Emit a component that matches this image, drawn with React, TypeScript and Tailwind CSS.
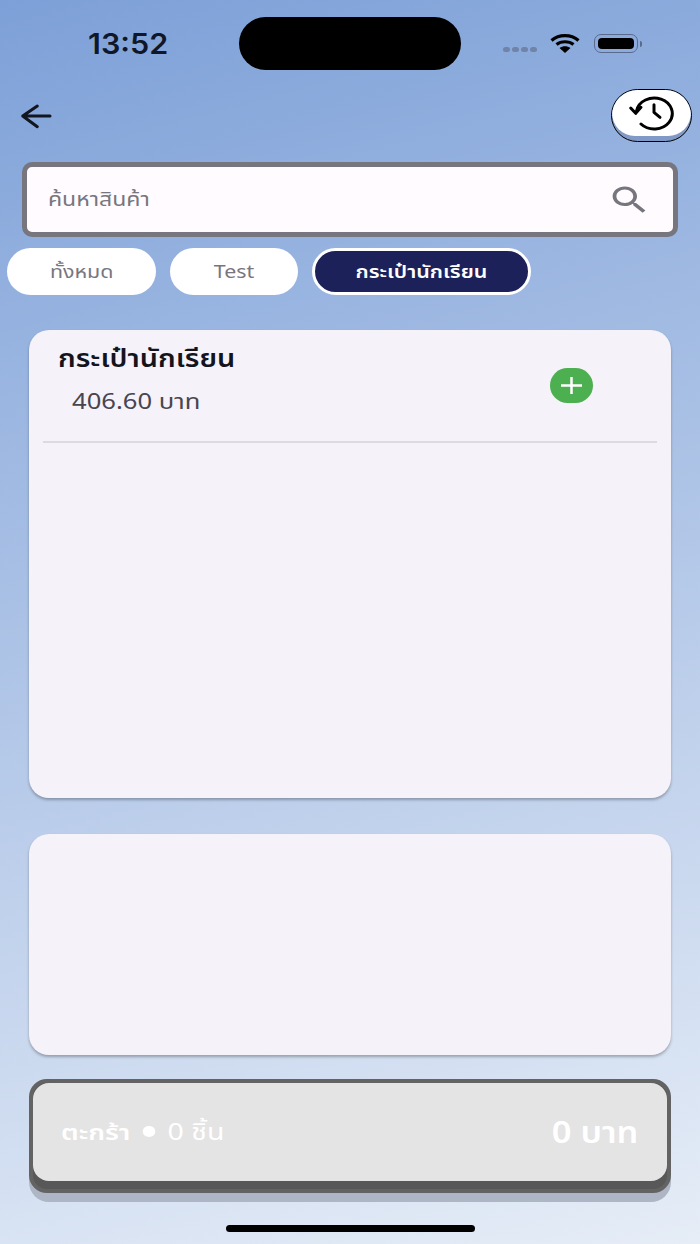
import React from 'react';

const FONT = "font-['Noto_Sans','Noto_Sans_Thai','DejaVu_Sans',sans-serif]";

const StatusBar = () => (
  <div className="flex h-[53px] mt-[17px] items-center">
    <div className="w-[239px] pl-[88px] text-[28px] font-semibold text-[#0f1729] font-['Inter',sans-serif] leading-none">
      <div className="origin-left scale-x-[1.09]">13:52</div>
    </div>
    <div className="w-[222px] h-[53px] rounded-full bg-black" />
    <div className="flex items-center pl-[42px]">
      <div className="flex gap-[2px] mt-[12px]">
        <span className="w-[7px] h-[5px] rounded-full bg-[#7083a8]" />
        <span className="w-[7px] h-[5px] rounded-full bg-[#7083a8]" />
        <span className="w-[7px] h-[5px] rounded-full bg-[#7083a8]" />
        <span className="w-[7px] h-[5px] rounded-full bg-[#7083a8]" />
      </div>
      <svg width="30" height="19" viewBox="0 0 30 19" className="ml-[13px]">
        <path d="M1.5 6.5 C9 0 21 0 28.5 6.5" fill="none" stroke="#000" strokeWidth="3.2" />
        <path d="M6.5 10.5 C11 6.8 19 6.8 23.5 10.5" fill="none" stroke="#000" strokeWidth="3.2" />
        <path d="M9.5 14 L15 19 L20.5 14 C17 11.8 13 11.8 9.5 14 Z" fill="#000" />
      </svg>
      <div className="ml-[14px] w-[44px] h-[19px] rounded-[7px] border border-[#5a6a8c] p-[3px]">
        <div className="w-full h-full rounded-[4px] bg-black" />
      </div>
      <div className="w-[2px] h-[6px] rounded-r-full bg-[#5a6a8c] ml-[2px]" />
    </div>
  </div>
);

const Chip = ({ label, width, active }: { label: string; width: string; active?: boolean }) => (
  <div
    className={`${width} h-[47px] rounded-full flex items-center justify-center text-[18px] ${
      active ? 'bg-[#1c2259] border-[3px] border-white font-semibold text-white' : 'bg-white text-[#77767f]'
    }`}
  >
    <span className="scale-x-[1.19]">{label}</span>
  </div>
);

export default function App() {
  return (
    <div className={`${FONT} w-[700px] h-[1244px] overflow-hidden flex flex-col bg-[linear-gradient(165deg,#7da0d8_0%,#e6edf7_100%)]`}>
      <StatusBar />

      {/* header */}
      <div className="flex items-center justify-between mt-[19px] pl-[20px] pr-[8px]">
        <svg width="32" height="26" viewBox="0 0 32 26" fill="none" stroke="#11161f" strokeWidth="3" strokeLinecap="round" strokeLinejoin="round">
          <path d="M17.3 3 L2.7 13 L17.3 23.7 M2.7 13 H30" />
        </svg>
        <div className="w-[81px] h-[53px] rounded-[27px] bg-[#8199c6] border-[1.5px] border-black overflow-hidden">
          <div className="w-full h-[46px] rounded-[24px] bg-white flex items-center justify-center">
            <svg width="48" height="36" viewBox="0 0 48 36" fill="none" stroke="#000" strokeWidth="3" strokeLinecap="round" strokeLinejoin="round">
              <path d="M8.5 16 A18 15.5 0 1 1 13 29" />
              <path d="M2.7 13 L7.7 18.3 L13 12.3" />
              <path d="M26 9.7 V17.3 L32 22.3" />
            </svg>
          </div>
        </div>
      </div>

      {/* search */}
      <div className="mx-[22px] mt-[20px] h-[75px] rounded-[10px] border-[5px] border-[#77767f] bg-[#fffbfe] flex items-center justify-between pl-[21px] pr-[21px]">
        <span className="text-[20px] text-[#77767f] origin-left scale-x-[1.15] pb-[2px]">ค้นหาสินค้า</span>
        <svg width="45" height="36" viewBox="0 0 24 24" preserveAspectRatio="none" fill="#77767f">
          <path d="M15.5 14h-.79l-.28-.27C15.41 12.59 16 11.11 16 9.5 16 5.91 13.09 3 9.5 3S3 5.91 3 9.5 5.91 16 9.5 16c1.61 0 3.09-.59 4.23-1.57l.27.28v.79l5 4.99L20.49 19l-4.99-5zm-6 0C7.01 14 5 11.99 5 9.5S7.01 5 9.5 5 14 7.01 14 9.5 11.99 14 9.5 14z" />
        </svg>
      </div>

      {/* categories */}
      <div className="flex gap-[14px] pl-[7px] mt-[11px]">
        <Chip label="ทั้งหมด" width="w-[149px]" />
        <Chip label="Test" width="w-[128px]" />
        <Chip label="กระเป๋านักเรียน" width="w-[219px]" active />
      </div>

      {/* products */}
      <div className="mx-[29px] mt-[35px] h-[468px] rounded-[20px] bg-[#f5f2fa] shadow-[0_2px_3px_rgba(0,0,0,0.28)] px-[14px]">
        <div className="flex items-center justify-between h-[113px] border-b-2 border-[#dcdae3]">
          <div className="pl-[15px] pb-[14px]">
            <div className="text-[24px] font-semibold text-[#14141c] leading-[32px] origin-left scale-x-[1.2]">กระเป๋านักเรียน</div>
            <div className="text-[22px] text-[#49454f] pl-[12px] mt-[10px] leading-[32px] origin-left scale-x-[1.165]">406.60 บาท</div>
          </div>
          <div className="w-[43px] h-[35px] rounded-full bg-[#4caf50] flex items-center justify-center mr-[64px]">
            <svg width="21" height="17" viewBox="0 0 21 17" fill="none" stroke="#fff" strokeWidth="2.5">
              <path d="M0 8.5 H21 M10.5 0 V17" />
            </svg>
          </div>
        </div>
      </div>

      <div className="mx-[29px] mt-[36px] h-[221px] rounded-[20px] bg-[#f5f2fa] shadow-[0_2px_3px_rgba(0,0,0,0.28)]" />

      {/* cart */}
      <div className="mx-[29px] mt-[24px] h-[123px] rounded-[20px] bg-[#aeb6c5]">
        <div className="h-[114px] rounded-[18px] border-[4px] border-[#636363] bg-[#585858]">
          <div className="h-[98px] rounded-[16px] bg-[#e4e4e4] flex items-center justify-between pl-[28px] pr-[29px] pb-[1px] text-white">
            <div className="flex items-center text-[22px] origin-left scale-x-[1.24]">
              <span className="font-semibold">ตะกร้า</span>
              <span className="w-[10px] h-[11px] rounded-full bg-white mx-[10px]" />
              <span className="text-[23px]">0 ชิ้น</span>
            </div>
            <div className="text-[30px] font-semibold origin-right scale-x-[1.15]">0 บาท</div>
          </div>
        </div>
      </div>

      <div className="mt-[23px] mx-auto w-[249px] h-[7px] rounded-full bg-black" />
    </div>
  );
}
